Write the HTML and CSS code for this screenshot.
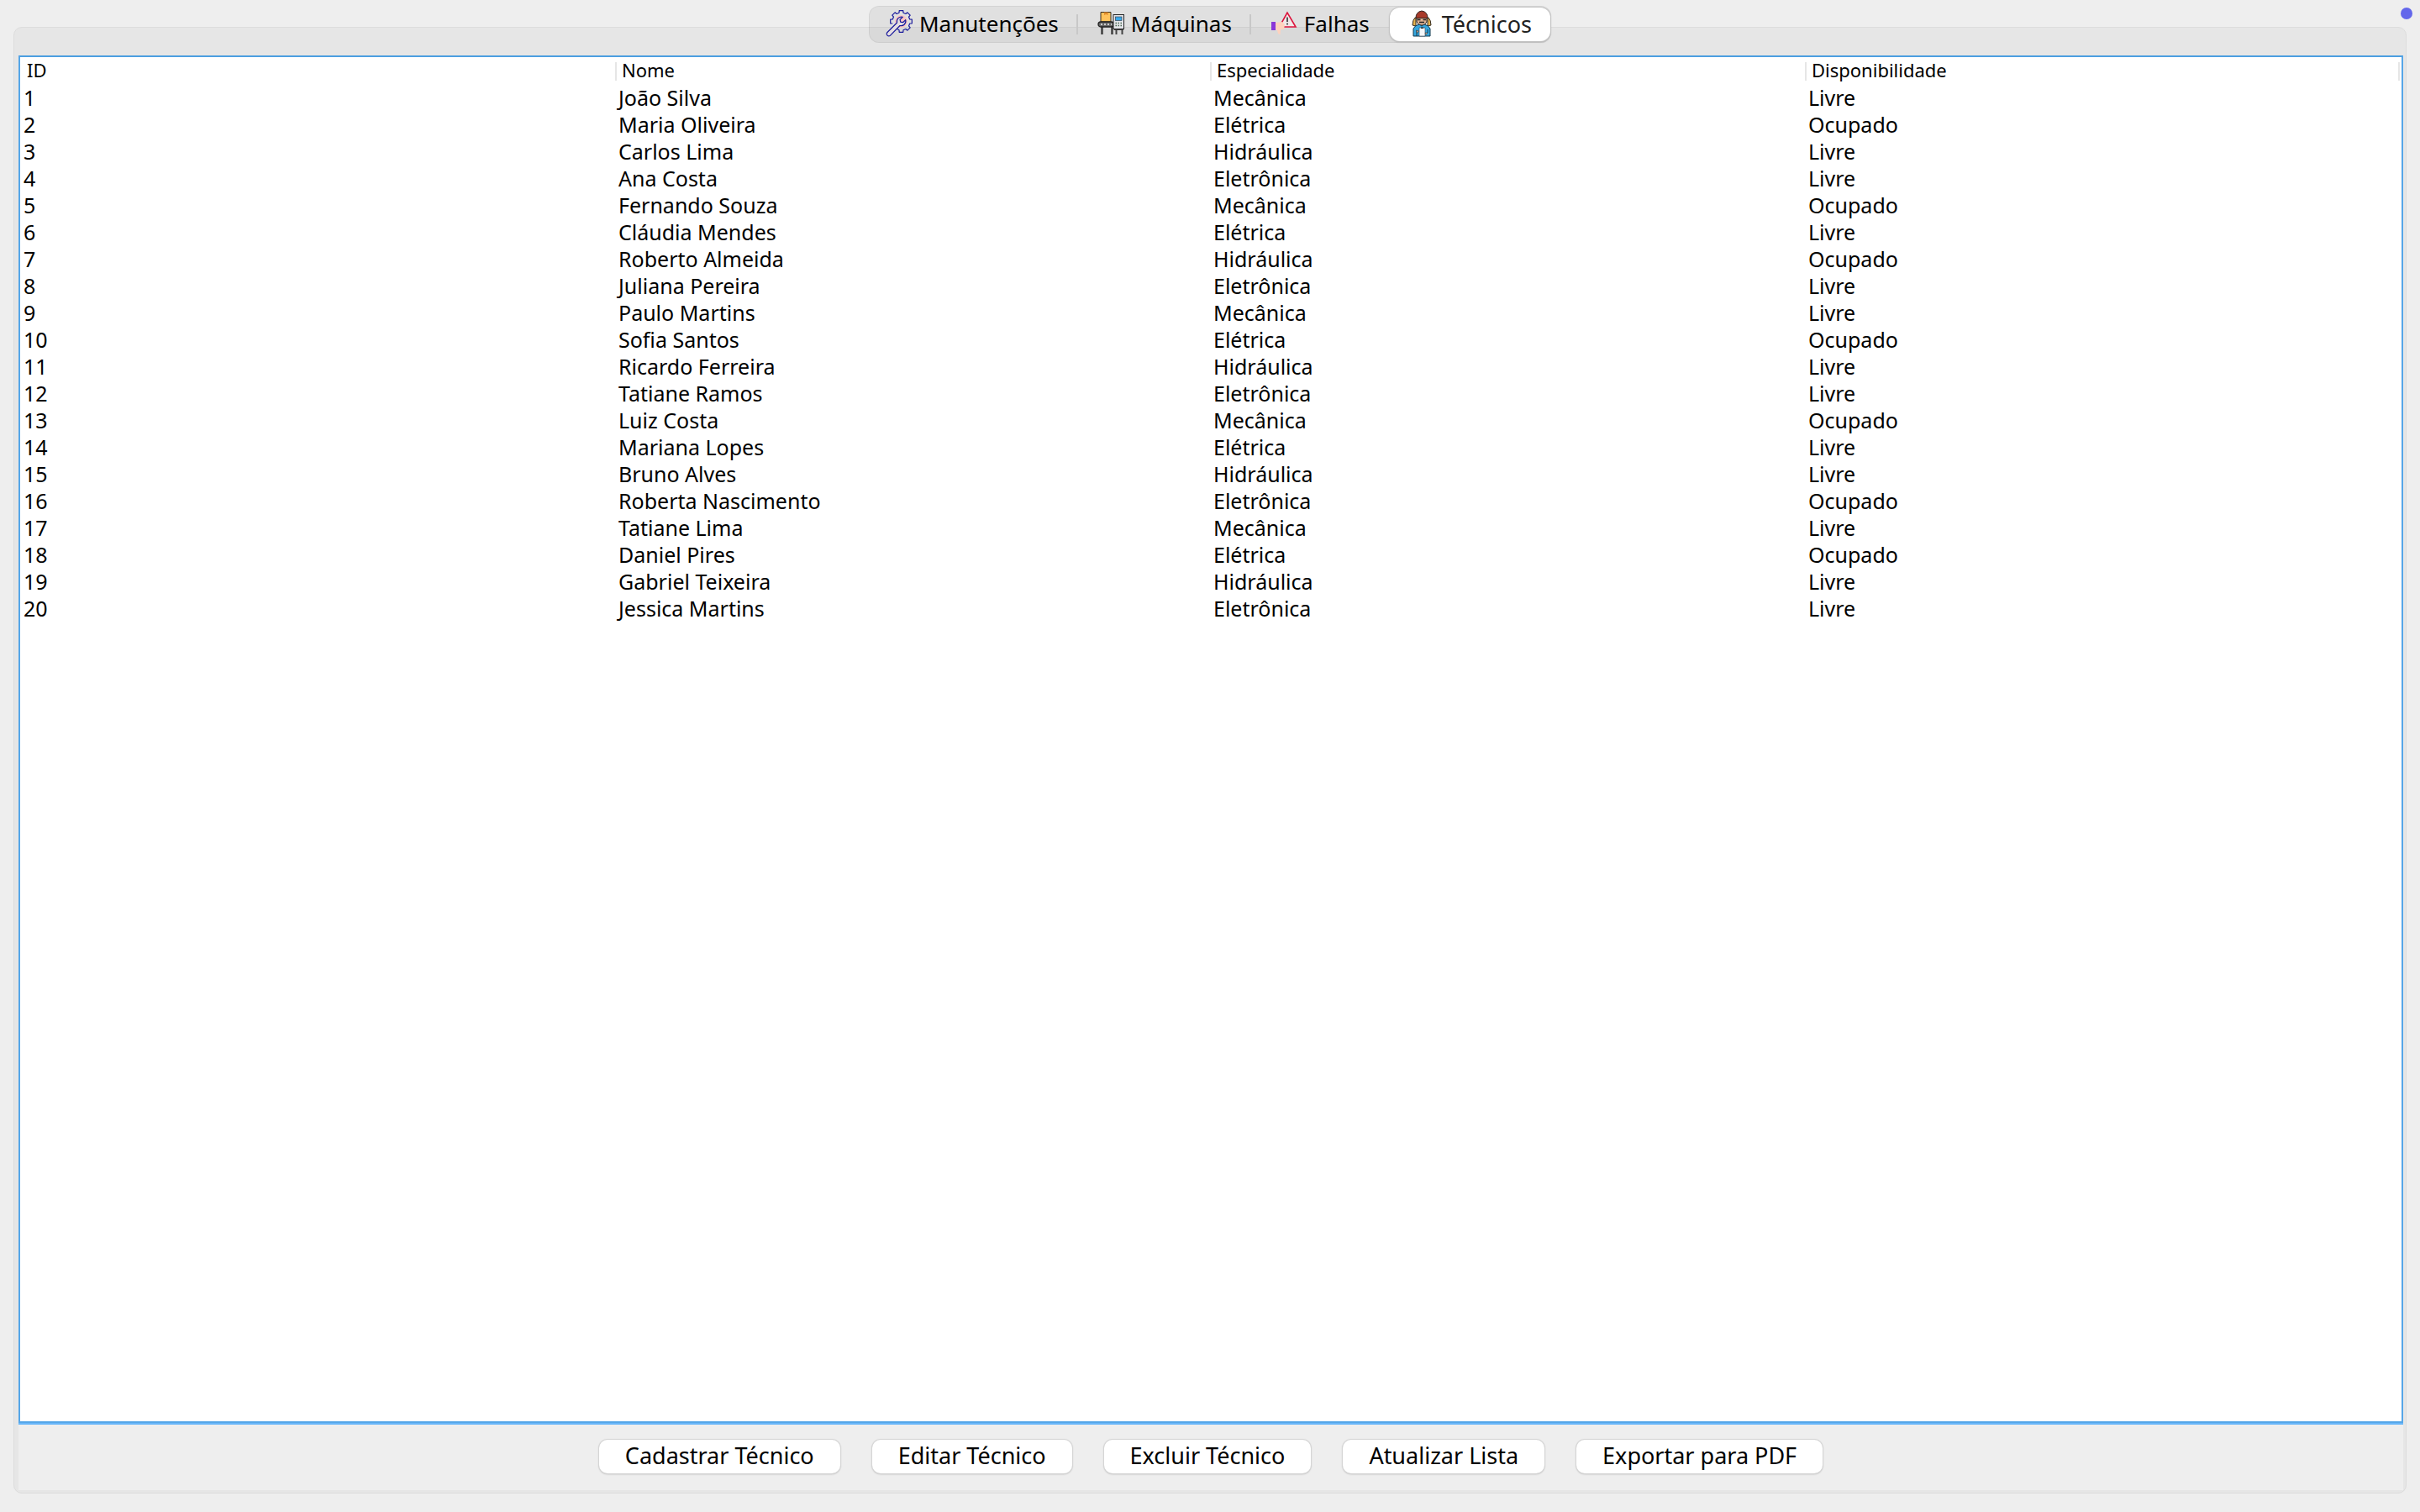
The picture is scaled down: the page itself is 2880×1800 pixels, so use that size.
FILE: index.html
```html
<!DOCTYPE html>
<html lang="pt-BR">
<head>
<meta charset="utf-8">
<title>Técnicos</title>
<link rel="stylesheet" href="styles.css">
</head>
<body>
<span class="status-dot"></span>
<nav class="tabs" role="tablist">
  <button class="tab" role="tab" type="button">
    <svg class="icon" viewBox="0 0 32 32"><circle cx="18.500" cy="13.500" r="7.500" fill="#fbc4c4"/><g transform="translate(18.500 13.500)" fill="none" stroke="#1a1a9c" stroke-width="1.200" stroke-linejoin="round"><path d="M-10.200 2.500L-12.800 2.300-12.800-2.300-10.200-2.500-9-5.400-10.700-7.400-7.400-10.700-5.400-9-2.500-10.200-2.300-12.800 2.300-12.800 2.500-10.200 5.400-9 7.400-10.700 10.700-7.400 9-5.400 10.200-2.500 12.800-2.300 12.800 2.300 10.200 2.500 9 5.400 10.700 7.400 7.400 10.700 5.400 9 2.500 10.200 2.300 12.800-2.300 12.800-2.500 10.200-5 9"/><path d="M-5 1.500L-16.500 13a2.500 2.500 0 0 0 3.600 3.600L-1.500 5a5.500 5.500 0 0 0 6.700-6.800L2 1.200-.8.600-1.400-2.200 1.800-5.200A5.500 5.500 0 0 0-5 1.500z" fill="#e6dfe2"/></g></svg>
    <span>Manutenções</span>
  </button>
  <button class="tab" role="tab" type="button">
    <svg class="icon" viewBox="0 0 32 32"><path d="M4 2.500h12V14H4z" fill="#ffc35c" stroke="#3b3225"/><path d="M8 2.500h4.500V6L10.200 5 8 6z" fill="#e08c2c"/><path d="M5.500 20v9M17.500 20v9" stroke="#444" stroke-width="2.600"/><rect x="1" y="14" width="18.500" height="6" rx="3" fill="#666" stroke="#222" stroke-width="1.300"/><path d="M4 17h13" stroke="#ccc" stroke-width="2" stroke-dasharray="2 2"/><path d="M20 23h11M22.500 23v6M29.500 23v6" stroke="#444" stroke-width="2"/><rect x="19" y="5.500" width="12.500" height="17" fill="#e4e5ea" stroke="#222"/><rect x="21.500" y="8" width="7.500" height="4.500" fill="#38a8ea" stroke="#345" stroke-width=".7"/><path d="M21.500 15.500h1.500m1.500 0h1.500m1.500 0h1.500M21.500 18.500h1.500m1.500 0h1.500m1.500 0h1.500" stroke="#47674f" stroke-width="1.600"/></svg>
    <span>Máquinas</span>
  </button>
  <button class="tab" role="tab" type="button">
    <svg class="icon" viewBox="0 0 32 32"><path d="M20 3L10.500 20h19.500z" fill="#f0e8e9" stroke="#dc143c" stroke-width="1.600"/><path d="M20 8.500v5.500M20 15.500v2" stroke="#333" stroke-width="1.600"/><path d="M6 15l8-1 3 3-1 6h-4l-.5 6-2.500-1-1-4-2-1z" fill="#ffd2be"/><rect x="1" y="14" width="5" height="10" fill="#8a38d8"/></svg>
    <span>Falhas</span>
  </button>
  <button class="tab selected" role="tab" type="button" aria-selected="true">
    <svg class="icon" viewBox="0 0 32 32"><path d="M8 9q-3 3-3 9l4 1V9zM24 9q3 3 3 9l-4 1V9z" fill="#e6b34e" stroke="#332a20"/><path d="M10 9h12v5l-3 4h-6l-3-4z" fill="#e0b394" stroke="#222"/><path d="M11 11.500h3.500m3 0H21M13 14.500h6" stroke="#222" stroke-width="1.400"/><path d="M9 9.500Q9 2 16 1q7 1 7 8.500z" fill="#a83a2a" stroke="#33201c"/><path d="M6 31v-9q2-4 7-5l3 2 3-2q5 1 7 5v9z" fill="#35a6de" stroke="#12384c"/><path d="M10 24v7M23 23v4" stroke="#12384c"/><path d="M13 21h7v10h-7z" fill="#f4f7fa" stroke="#345" stroke-width=".6"/><path d="M15 20.500h3v1.500h-3z" fill="#333"/><path d="M9.500 24l3 1-2 2.500zM23 27h-3l1 2.500z" fill="#e0b394" stroke="#222" stroke-width=".5"/></svg>
    <span>Técnicos</span>
  </button>
</nav>
<main class="panel">
  <div class="content">
    <div class="table-wrap">
      <table class="grid">
        <thead><tr><th scope="col">ID</th><th scope="col">Nome</th><th scope="col">Especialidade</th><th scope="col">Disponibilidade</th></tr></thead>
        <tbody>
          <tr><td>1</td><td>João Silva</td><td>Mecânica</td><td>Livre</td></tr>
          <tr><td>2</td><td>Maria Oliveira</td><td>Elétrica</td><td>Ocupado</td></tr>
          <tr><td>3</td><td>Carlos Lima</td><td>Hidráulica</td><td>Livre</td></tr>
          <tr><td>4</td><td>Ana Costa</td><td>Eletrônica</td><td>Livre</td></tr>
          <tr><td>5</td><td>Fernando Souza</td><td>Mecânica</td><td>Ocupado</td></tr>
          <tr><td>6</td><td>Cláudia Mendes</td><td>Elétrica</td><td>Livre</td></tr>
          <tr><td>7</td><td>Roberto Almeida</td><td>Hidráulica</td><td>Ocupado</td></tr>
          <tr><td>8</td><td>Juliana Pereira</td><td>Eletrônica</td><td>Livre</td></tr>
          <tr><td>9</td><td>Paulo Martins</td><td>Mecânica</td><td>Livre</td></tr>
          <tr><td>10</td><td>Sofia Santos</td><td>Elétrica</td><td>Ocupado</td></tr>
          <tr><td>11</td><td>Ricardo Ferreira</td><td>Hidráulica</td><td>Livre</td></tr>
          <tr><td>12</td><td>Tatiane Ramos</td><td>Eletrônica</td><td>Livre</td></tr>
          <tr><td>13</td><td>Luiz Costa</td><td>Mecânica</td><td>Ocupado</td></tr>
          <tr><td>14</td><td>Mariana Lopes</td><td>Elétrica</td><td>Livre</td></tr>
          <tr><td>15</td><td>Bruno Alves</td><td>Hidráulica</td><td>Livre</td></tr>
          <tr><td>16</td><td>Roberta Nascimento</td><td>Eletrônica</td><td>Ocupado</td></tr>
          <tr><td>17</td><td>Tatiane Lima</td><td>Mecânica</td><td>Livre</td></tr>
          <tr><td>18</td><td>Daniel Pires</td><td>Elétrica</td><td>Ocupado</td></tr>
          <tr><td>19</td><td>Gabriel Teixeira</td><td>Hidráulica</td><td>Livre</td></tr>
          <tr><td>20</td><td>Jessica Martins</td><td>Eletrônica</td><td>Livre</td></tr>
        </tbody>
      </table>
    </div>
    <div class="actions">
      <button class="action" type="button">Cadastrar Técnico</button>
      <button class="action" type="button">Editar Técnico</button>
      <button class="action" type="button">Excluir Técnico</button>
      <button class="action" type="button">Atualizar Lista</button>
      <button class="action" type="button">Exportar para PDF</button>
    </div>
  </div>
</main>
</body>
</html>
```
FILE: styles.css
```css
* { box-sizing: border-box; }

body {
  margin: 0;
  min-height: 100vh;
  display: flex;
  flex-direction: column;
  padding: 7px 16px 22px;
  background: #eeeeee;
  color: #000;
  font-family: "Lucida Grande", "Noto Sans", sans-serif;
  font-size: 25px;
}

button {
  font: inherit;
  color: inherit;
  border: 0;
}

.status-dot {
  position: absolute;
  top: 9px;
  right: 9px;
  width: 14px;
  height: 14px;
  border-radius: 50%;
  background: #6366eb;
}

/* The tab strip straddles the top edge of the panel. */
.tabs {
  position: relative;
  z-index: 1;
  align-self: center;
  display: flex;
  height: 44px;
  margin-bottom: -19px;
  border-radius: 12px;
  background: rgba(0, 0, 0, 0.055);
  box-shadow: inset 0 0 0 1px rgba(0, 0, 0, 0.05);
  font-size: 26px;
}

.tab {
  display: flex;
  align-items: center;
  gap: 8px;
  padding: 0 23px 2px;
  background: linear-gradient(#c8c8c8, #c8c8c8) right center / 2px 24px no-repeat;
  white-space: nowrap;
}

.tab:first-child { padding-left: 20px; }

.tab:nth-child(3) { background: none; }

.tab.selected {
  margin: 2px 1px;
  padding: 0 22px 2px;
  border-radius: 12px;
  background: #fff;
  color: #222;
  font-size: 27px;
  box-shadow: 0 0 1px 1px #c4c4c4, 0 1px 2px #999;
}

.icon {
  width: 32px;
  height: 32px;
}

.panel {
  flex: 1;
  display: flex;
  padding: 33px 3px 3px 5px;
  border: 1px solid #dcdcdc;
  border-radius: 10px;
  background: #e6e6e6;
}

.content {
  flex: 1;
  display: flex;
  flex-direction: column;
  background: #eeeeee;
}

.table-wrap {
  flex: 1;
  padding-right: 2px;
  border: 2px solid #56a6e8;
  border-top-color: #4c9ee0;
  background: #fff;
  box-shadow: 0 2px #68b7fa;
}

.grid {
  width: 100%;
  table-layout: fixed;
  border-collapse: collapse;
}

.grid th {
  height: 32px;
  padding: 0 8px 2px;
  font-size: 22px;
  font-weight: 400;
  line-height: 30px;
  text-align: left;
}

.grid th + th {
  background: linear-gradient(#e6e6e6, #e6e6e6) left 6px / 2px 22px no-repeat;
}

.grid th:last-child {
  background:
    linear-gradient(#e6e6e6, #e6e6e6) left 6px / 2px 22px no-repeat,
    linear-gradient(#e6e6e6, #e6e6e6) right 6px / 2px 22px no-repeat;
}

.grid td {
  height: 32px;
  padding: 0 4px;
  line-height: 32px;
}

.actions {
  display: flex;
  justify-content: center;
  gap: 38px;
  padding: 20px 0;
}

.action {
  height: 40px;
  padding: 0 31px 3px;
  border-radius: 10px;
  background: #fff;
  font-size: 27px;
  line-height: 36px;
  box-shadow: 0 0 1px 1px #d4d4d4, 0 1px 2px #aaa;
}
```
